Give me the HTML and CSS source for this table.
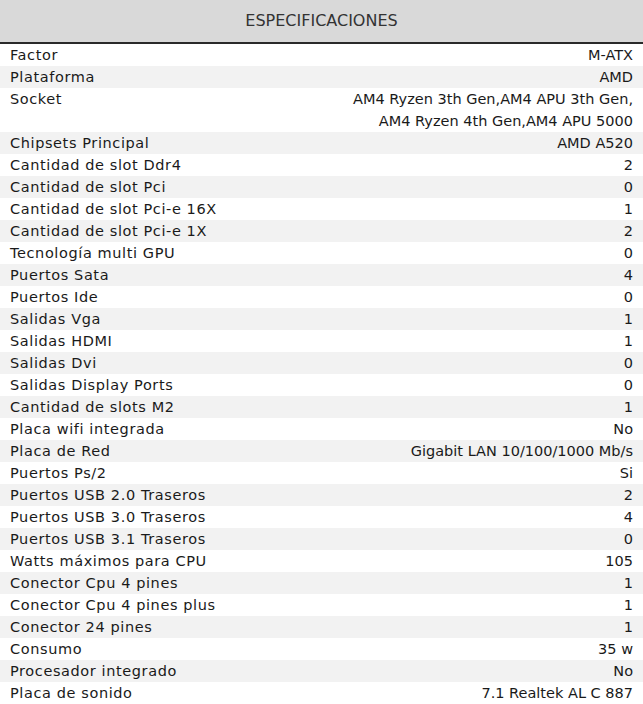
FILE: index.html
```html
<!DOCTYPE html>
<html lang="es">
<head>
<meta charset="utf-8">
<title>Especificaciones</title>
<link rel="stylesheet" href="styles.css">
</head>
<body>
<div class="specs">
  <div class="specs-head">ESPECIFICACIONES</div>
  <div class="row"><span class="k">Factor</span><span class="v">M-ATX</span></div>
  <div class="row"><span class="k">Plataforma</span><span class="v">AMD</span></div>
  <div class="row"><span class="k">Socket</span><span class="v">AM4 Ryzen 3th Gen,AM4 APU 3th Gen,<br>AM4 Ryzen 4th Gen,AM4 APU 5000</span></div>
  <div class="row"><span class="k">Chipsets Principal</span><span class="v">AMD A520</span></div>
  <div class="row"><span class="k">Cantidad de slot Ddr4</span><span class="v">2</span></div>
  <div class="row"><span class="k">Cantidad de slot Pci</span><span class="v">0</span></div>
  <div class="row"><span class="k">Cantidad de slot Pci-e 16X</span><span class="v">1</span></div>
  <div class="row"><span class="k">Cantidad de slot Pci-e 1X</span><span class="v">2</span></div>
  <div class="row"><span class="k">Tecnología multi GPU</span><span class="v">0</span></div>
  <div class="row"><span class="k">Puertos Sata</span><span class="v">4</span></div>
  <div class="row"><span class="k">Puertos Ide</span><span class="v">0</span></div>
  <div class="row"><span class="k">Salidas Vga</span><span class="v">1</span></div>
  <div class="row"><span class="k">Salidas HDMI</span><span class="v">1</span></div>
  <div class="row"><span class="k">Salidas Dvi</span><span class="v">0</span></div>
  <div class="row"><span class="k">Salidas Display Ports</span><span class="v">0</span></div>
  <div class="row"><span class="k">Cantidad de slots M2</span><span class="v">1</span></div>
  <div class="row"><span class="k">Placa wifi integrada</span><span class="v">No</span></div>
  <div class="row"><span class="k">Placa de Red</span><span class="v">Gigabit LAN 10/100/1000 Mb/s</span></div>
  <div class="row"><span class="k">Puertos Ps/2</span><span class="v">Si</span></div>
  <div class="row"><span class="k">Puertos USB 2.0 Traseros</span><span class="v">2</span></div>
  <div class="row"><span class="k">Puertos USB 3.0 Traseros</span><span class="v">4</span></div>
  <div class="row"><span class="k">Puertos USB 3.1 Traseros</span><span class="v">0</span></div>
  <div class="row"><span class="k">Watts máximos para CPU</span><span class="v">105</span></div>
  <div class="row"><span class="k">Conector Cpu 4 pines</span><span class="v">1</span></div>
  <div class="row"><span class="k">Conector Cpu 4 pines plus</span><span class="v">1</span></div>
  <div class="row"><span class="k">Conector 24 pines</span><span class="v">1</span></div>
  <div class="row"><span class="k">Consumo</span><span class="v">35 w</span></div>
  <div class="row"><span class="k">Procesador integrado</span><span class="v">No</span></div>
  <div class="row"><span class="k">Placa de sonido</span><span class="v">7.1 Realtek AL C 887</span></div>
</div>
</body>
</html>
```
FILE: styles.css
```css
html, body {
  margin: 0;
  padding: 0;
  background: #ffffff;
}
.specs {
  width: 643px;
  font-family: "DejaVu Sans", sans-serif;
  color: #1a1a1a;
}
.specs-head {
  height: 42px;
  line-height: 42px;
  background: #d9d9d9;
  border-bottom: 2px solid #2a2a2a;
  text-align: center;
  font-size: 16px;
  color: #333333;
}
.row {
  display: flex;
  justify-content: space-between;
  align-items: flex-start;
  padding: 0 10px;
  font-size: 14.5px;
  line-height: 22px;
}
.k {
  letter-spacing: 0.6px;
}
.row:nth-child(odd) {
  background: #f2f2f2;
}
.v {
  text-align: right;
}
```
